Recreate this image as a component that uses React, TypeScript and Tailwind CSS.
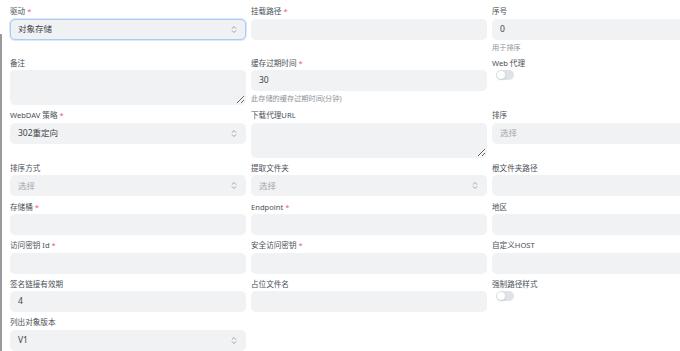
import React from "react";

type Cell =
    | { kind: "input"; label: string; req?: boolean; value?: string; placeholder?: string; help?: string }
    | { kind: "select"; label: string; req?: boolean; value?: string; placeholder?: string; focus?: boolean; help?: string }
    | { kind: "textarea"; label: string; req?: boolean }
    | { kind: "toggle"; label: string }
    | { kind: "empty" };

const rows: Cell[][] = [
    [
        { kind: "select", label: "驱动", req: true, value: "对象存储", focus: true },
        { kind: "input", label: "挂载路径", req: true },
        { kind: "input", label: "序号", value: "0", help: "用于排序" },
    ],
    [
        { kind: "textarea", label: "备注" },
        { kind: "input", label: "缓存过期时间", req: true, value: "30", help: "此存储的缓存过期时间(分钟)" },
        { kind: "toggle", label: "Web 代理" },
    ],
    [
        { kind: "select", label: "WebDAV 策略", req: true, value: "302重定向" },
        { kind: "textarea", label: "下载代理URL" },
        { kind: "input", label: "排序", placeholder: "选择" },
    ],
    [
        { kind: "select", label: "排序方式", placeholder: "选择" },
        { kind: "select", label: "提取文件夹", placeholder: "选择" },
        { kind: "input", label: "根文件夹路径" },
    ],
    [
        { kind: "input", label: "存储桶", req: true },
        { kind: "input", label: "Endpoint", req: true },
        { kind: "input", label: "地区" },
    ],
    [
        { kind: "input", label: "访问密钥 Id", req: true },
        { kind: "input", label: "安全访问密钥", req: true },
        { kind: "input", label: "自定义HOST" },
    ],
    [
        { kind: "input", label: "签名链接有效期", value: "4" },
        { kind: "input", label: "占位文件名" },
        { kind: "toggle", label: "强制路径样式" },
    ],
    [
        { kind: "select", label: "列出对象版本", value: "V1" },
        { kind: "empty" },
        { kind: "empty" },
    ],
];

const Chevrons = () => (
    <svg width="6" height="9" viewBox="0 0 6 9" fill="none" stroke="#8a8f98" strokeWidth="0.8" strokeLinecap="round" strokeLinejoin="round">
        <path d="M1.2 3.3 L3 1.5 L4.8 3.3" />
        <path d="M1.2 5.7 L3 7.5 L4.8 5.7" />
    </svg>
);

const Label = ({ text, req }: { text: string; req?: boolean }) => (
    <div className="text-[7.6px] leading-[12px] mb-[1.5px] font-normal text-[#4a4f56] whitespace-nowrap">
        {text}
        {req && <span className="text-[#ef5a6f] ml-[2px]">*</span>}
    </div>
);

const Field = ({ cell }: { cell: Cell }) => {
    if (cell.kind === "empty") return <div />;
    if (cell.kind === "toggle") {
        return (
            <div>
                <Label text={cell.label} />
                <div className="ml-[4px] mt-[0.5px] w-[18px] h-[10px] rounded-full bg-[#dfe2e7] flex items-center px-[1px]">
                    <div className="w-[8px] h-[8px] rounded-full bg-white shadow-sm" />
                </div>
            </div>
        );
    }
    if (cell.kind === "textarea") {
        return (
            <div>
                <Label text={cell.label} req={cell.req} />
                <textarea
                    readOnly
                    className="block w-full h-[35px] rounded-[5px] bg-[#f1f2f4] border border-transparent outline-none resize-y"
                />
            </div>
        );
    }
    const text = cell.value ?? cell.placeholder;
    const focus = cell.kind === "select" && cell.focus;
    return (
        <div>
            <Label text={cell.label} req={cell.req} />
            <div
                className={
                    focus
                        ? "h-[21px] rounded-[5px] bg-[#f0f1f3] border border-[#a9cdf5] ring-1 ring-[#dbe9fb] flex items-center justify-between pl-[7px] pr-[8px]"
                        : "h-[21px] rounded-[5px] bg-[#f1f2f4] border border-transparent flex items-center justify-between pl-[7px] pr-[8px]"
                }
            >
                <span className={cell.value ? "text-[8.5px] text-[#3f444c]" : "text-[8.5px] text-[#a3a7ae]"}>{text}</span>
                {cell.kind === "select" && <Chevrons />}
            </div>
            {cell.help && (
                <div className="mt-[1px] text-[7.2px] leading-[12px] text-[#90949b] whitespace-nowrap">{cell.help}</div>
            )}
        </div>
    );
};

export default function App() {
    return (
        <div
            className="w-[680px] h-[351px] overflow-hidden bg-white flex"
            style={{ fontFamily: '"Noto Sans", "Noto Sans CJK SC", sans-serif' }}
        >
            {/* left scroll edge */}
            <div className="w-[2px] shrink-0 flex flex-col">
                <div className="h-[34px]" />
                <div className="flex-1 bg-[#9a9a9a]" />
            </div>
            <div className="pl-[8px] pt-[5px] grid grid-cols-[236px_236px_236px] gap-x-[5px] gap-y-[4px] items-start shrink-0">
                {rows.map((row, i) =>
                    row.map((cell, j) => <Field key={`${i}-${j}`} cell={cell} />)
                )}
            </div>
        </div>
    );
}
